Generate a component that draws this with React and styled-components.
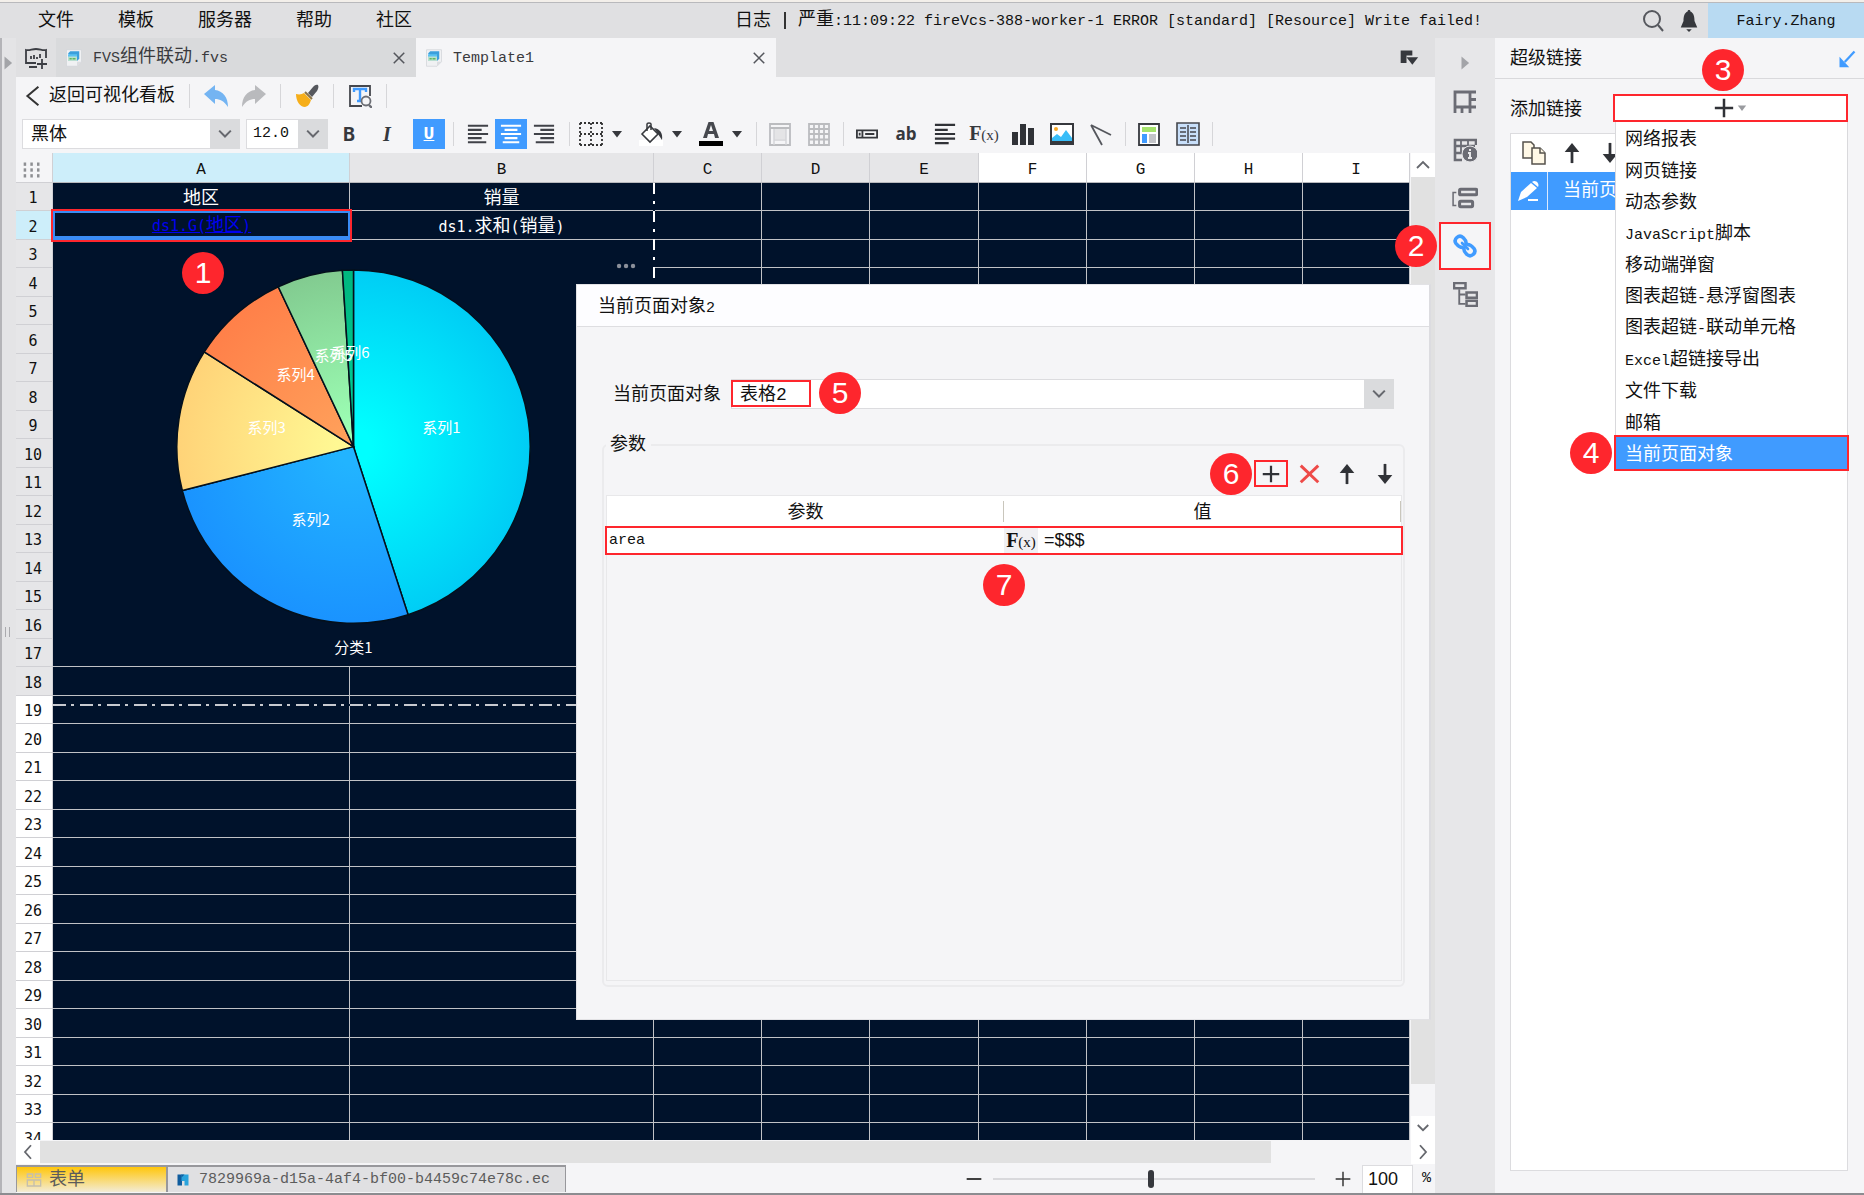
import React, { useState } from 'react'
import styled, { createGlobalStyle, css } from 'styled-components'

const RED = '#fe262d'
const BLUE = '#409bff'
const NAVY = '#00122b'

const columnas = [
  { name: 'A', width: 297, state: 'active' },
  { name: 'B', width: 304, state: 'used' },
  { name: 'C', width: 108, state: 'used' },
  { name: 'D', width: 108, state: 'used' },
  { name: 'E', width: 109, state: 'used' },
  { name: 'F', width: 108 },
  { name: 'G', width: 108 },
  { name: 'H', width: 108 },
  { name: 'I', width: 107 },
]
const rows = Array.from({ length: 34 }, (_, i) => i + 1)

const menus = ['文件', '模板', '服务器', '帮助', '社区']

const linkTypes = [
  '网络报表', '网页链接', '动态参数', 'JavaScript脚本', '移动端弹窗', '图表超链-悬浮窗图表',
  '图表超链-联动单元格', 'Excel超链接导出', '文件下载', '邮箱', '当前页面对象',
]

const series = [
  { name: '系列1', value: 45, inner: '#00ffff', outer: '#00cdf5', x: 389, y: 193 },
  { name: '系列2', value: 26, inner: '#22b4ff', outer: '#1a93ff', x: 258, y: 285 },
  { name: '系列3', value: 13, inner: '#fff893', outer: '#ffd378', x: 214, y: 193 },
  { name: '系列4', value: 9, inner: '#ff9f5a', outer: '#ff8049', x: 243, y: 140 },
  { name: '系列5', value: 6, inner: '#9cffb4', outer: '#82cb90', x: 281, y: 121 },
  { name: '系列6', value: 1, inner: '#00cf98', outer: '#00b67e', x: 298, y: 118 },
]

// half-width runs are set smaller so that two of them fill one full-width glyph
const Mixed = ({ children }) =>
  children.split(/([\x20-\x7e]+)/).filter(Boolean).map((part, i) =>
    /^[\x20-\x7e]/.test(part) ? <Latin key={i}>{part}</Latin> : <span key={i}>{part}</span>
  )

const PieChart = () => {
  const cx = 301
  const cy = 207
  const r = 177
  const point = (pct) => {
    const a = (pct / 100) * Math.PI * 2
    return `${(cx + r * Math.sin(a)).toFixed(2)} ${(cy - r * Math.cos(a)).toFixed(2)}`
  }
  let start = 0
  const slices = series.map((s) => {
    const from = start
    start += s.value
    return { ...s, d: `M${cx} ${cy}L${point(from)}A${r} ${r} 0 ${s.value > 50 ? 1 : 0} 1 ${point(start)}Z` }
  })
  return (
    <Chart viewBox="0 0 601 424" role="img" aria-label="分类1">
      <defs>
        {slices.map((s) => (
          <radialGradient key={s.name} id={`g-${s.value}`} gradientUnits="userSpaceOnUse" cx={cx} cy={cy} r={r}>
            <stop offset="0.1" stopColor={s.inner} />
            <stop offset="1" stopColor={s.outer} />
          </radialGradient>
        ))}
      </defs>
      {slices.map((s) => (
        <path key={s.name} d={s.d} fill={`url(#g-${s.value})`} stroke="#04101c" strokeWidth="1.5" />
      ))}
      {slices.map((s) => (
        <text key={s.name} x={s.x} y={s.y} textAnchor="middle">{s.name}</text>
      ))}
      <text x="301" y="414" textAnchor="middle">分类1</text>
      <g fill="#8b909a">
        <circle cx="567" cy="26" r="2.2" />
        <circle cx="574" cy="26" r="2.2" />
        <circle cx="581" cy="26" r="2.2" />
      </g>
    </Chart>
  )
}

const icons = {
  newTab: <g fill="none" stroke="#3c3e44" strokeWidth="1.8"><path d="M22 12V4c-3 1-6-1-10-1S5 5 2 4v13h10M5 21h8M18 13v10M13 18h10" /><path d="M7 13v-3M10 13V9M13 13v-2M16 12V8" /></g>,
  doc: <g><path d="M2 1h20v16l-6 6H2z" fill="#f0f1f3" stroke="#d2d4d8" /><path d="M4 6l3-3h12v10l-3 3z" fill="#3a9fdc" /><path d="M4 7h12v4H4z" fill="#59c2f2" /><path d="M4 10h12v6H4z" fill="#b9dfd0" /><path d="M6 12h3v2H6zM10 12h4v2h-4z" fill="#5db85f" /><path d="M16 23v-6h6z" fill="#dcdde1" /></g>,
  close: <path d="M5 5l14 14M19 5L5 19" stroke="#54565c" strokeWidth="2" fill="none" />,
  tabList: <g fill="#36383d"><path d="M2 3h14v6H9v9H2z" /><path d="M9 11h14l-7 9z" /></g>,
  back: <path d="M19 2L7 12l12 10" stroke="#333" strokeWidth="2.2" fill="none" />,
  undo: <path d="M0 10L11 1v5c8 1 13 7 13 17-4-6-8-8-13-8v5z" fill="#74b4f2" />,
  redo: <path d="M24 10L13 1v5C5 7 0 13 0 23c4-6 8-8 13-8v5z" fill="#b9babd" />,
  brush: <g><path d="M23 1c1 2 0 4-1 6l-5 6-4-4 5-6c1-1 3-3 5-2z" fill="#55575d" /><path d="M1 10c4 1 6 0 8-1l7 7c-1 3-2 6-6 7C5 23 1 17 1 10z" fill="#f6ae1a" /><path d="M10 8l7 7" stroke="#8a7346" strokeWidth="2" /></g>,
  find: <g fill="none"><path d="M22 12V2H2v20h12" stroke="#45474d" strokeWidth="1.8" /><path d="M6 8V5h12v3M12 5v12M9 17h5" stroke={BLUE} strokeWidth="2.4" /><circle cx="18" cy="17" r="4.5" fill="#f5f5f7" stroke="#6c6e75" strokeWidth="1.8" /><path d="M21 21l3 3" stroke="#6c6e75" strokeWidth="2.4" /></g>,
  left: <path d="M1 3h22M1 7.5h15M1 12h22M1 16.5h15M1 21h20" stroke="#404248" strokeWidth="2.4" />,
  center: <path d="M1 3h22M5 7.5h14M1 12h22M5 16.5h14M3 21h18" stroke="#fff" strokeWidth="2.2" />,
  right: <path d="M1 3h22M8 7.5h15M1 12h22M8 16.5h15M3 21h20" stroke="#404248" strokeWidth="2.4" />,
  border: <g fill="none" stroke="#333" strokeWidth="1.8" strokeDasharray="2 2"><path d="M1 1h22M1 23h22M1 1v22M23 1v22M12 1v22M1 12h22" /></g>,
  fill: <g><path d="M0 18h24v6H0z" fill="#fff" /><path d="M3 12l8-8 8 8-8 8z" fill="#fff" stroke="#36383d" strokeWidth="1.6" /><path d="M8 9V2c0-1.5 4-1.5 4 0v6" fill="none" stroke="#36383d" strokeWidth="1.5" /><path d="M15 6c6 1 9 5 8 12l-4-6z" fill="#36383d" /></g>,
  color: <g><path d="M0 19h24v5H0z" fill="#000" /><path d="M4 16L9.5 0h5L20 16h-4l-1-4H9l-1 4zM10 9h4l-2-6z" fill="#46484e" /></g>,
  frame: <g fill="none" stroke="#bbbcbf" strokeWidth="1.8"><path d="M6 7h12v10H6z" fill="#e4e4e6" stroke="none" /><path d="M2 2h20v21H2zM2 6h20" /><path d="M6 7v16M18 7v16M6 18h12" stroke="#d3d4d7" strokeWidth="1.4" /></g>,
  grid: <path d="M2 2h20v21H2zM2 7h20M2 12h20M2 17.5h20M7 2v21M12 2v21M17 2v21" fill="none" stroke="#bbbcbf" strokeWidth="1.8" />,
  widget: <g fill="none" stroke="#36383d" strokeWidth="2"><path d="M1 8h22v8H1zM7 8v8M10 12h10M4 10.5v3" /></g>,
  lines: <path d="M1 2h22M1 7.5h14M1 12h22M1 17h22M1 22h15" stroke="#303237" strokeWidth="2.4" />,
  bars: <path d="M1 10h6v13H1zM9 2h6v21H9zM17 6h6v17h-6z" fill="#303237" />,
  image: <g><path d="M1 2h22v20H1z" fill="#fff" stroke="#36383d" strokeWidth="2" /><path d="M2 20v-4l5-4 4 3 5-7 6 8v4z" fill="#38bdf8" /><path d="M0 19h24v4H0z" fill="#36383d" /><circle cx="6" cy="7" r="2" fill="#f9a825" /></g>,
  slash: <path d="M2 3l20 10M2 3l11 20" stroke="#55575d" strokeWidth="1.8" fill="none" />,
  layout: <g><path d="M2 2h20v21H2z" fill="#fff" stroke="#36383d" strokeWidth="1.8" /><path d="M5 5h14v5H5z" fill="#a5e36c" /><path d="M5 12h5v9H5z" fill={BLUE} /><path d="M12 12h7v9h-7z" fill="#c3c4c8" /></g>,
  report: <g><path d="M1 1h22v22H1z" fill="#c8dffa" stroke="#45474d" strokeWidth="1.6" /><path d="M12 3v18M4 6h6M14 6h6M4 10h6M14 10h6M4 14h6M14 14h6M4 18h6M14 18h6" stroke="#45474d" strokeWidth="1.5" /></g>,
  search: <g fill="none" stroke="#55575d" strokeWidth="2"><circle cx="11" cy="10" r="8" /><path d="M17 16l5 6" /></g>,
  bell: <g fill="#36383d"><path d="M12 0c1 0 1.5.6 1.5 1.6C17 3 18 7 18 12l3 7H3l3-7c0-5 1-9 4.500-10.400C10.500.6 11 0 12 0z" /><path d="M9 21h6l-3 3z" /></g>,
  jump: <g stroke={BLUE} fill="none"><path d="M22 2L9 16" strokeWidth="3" /><path d="M2 23V9l13 14z" fill={BLUE} stroke="none" /></g>,
  plus: <path d="M12 1v22M1 12h22" stroke="#303237" strokeWidth="3" />,
  remove: <path d="M2 3l20 19M22 3L2 22" stroke="#ee4a48" strokeWidth="3.4" />,
  up: <g><path d="M12 23V6" stroke="#303237" strokeWidth="3" /><path d="M12 1l8 10H4z" fill="#303237" /></g>,
  down: <g><path d="M12 1v17" stroke="#303237" strokeWidth="3" /><path d="M12 23L4 13h16z" fill="#303237" /></g>,
  copy: <g fill="#fff8e6" stroke="#55524c" strokeWidth="1.5"><path d="M1 1h8l3 3v13H1z" /><path d="M10 7h8l5 5v11H10z" /><path d="M18 7v5h5" /></g>,
  pencil: <g fill="#fff"><path d="M1 22l3-9L14 4l6 5-10 9z" /><path d="M15 3c3-3 8 1 6 5z" /><path d="M11 20h10v2H11z" /></g>,
  cellAttr: <g fill="none" stroke="#6b6c74" strokeWidth="2.8"><path d="M2 19V2h21M17 2v21M2 17h21M17 9.5h6M9 17v6M2 17v6" /></g>,
  cellInfo: <g fill="none" stroke="#6b6c74" strokeWidth="2.6"><path d="M9 22H2V2h21v5M2 8h20M2 15h7" /><path d="M8 2v14M15 2v6" strokeWidth="1.8" /><circle cx="17" cy="16" r="8" fill="#6b6c74" stroke="#e7e7e9" strokeWidth="1" /><path d="M17 11v2M15 15h2v5M15 20h4" stroke="#e7e7e9" strokeWidth="2" /></g>,
  widgets: <g fill="none" stroke="#6b6c74" strokeWidth="2.8"><rect x="7" y="4" width="16" height="5" rx="1" /><rect x="7" y="15" width="12" height="5" rx="1" /><path d="M4 7H1v12h3" strokeWidth="1.4" /></g>,
  link: <g fill="none" stroke={BLUE} strokeWidth="3.6" strokeLinecap="round"><path d="M13 9.500c.5-3-1.500-4.500-3-6-4-3.500-10 1.500-7 6 2 2.500 3.500 4 6.500 4" /><path d="M11 14.500c-.5 3 1.500 4.500 3 6 4 3.500 10-1.500 7-6-2-2.500-3.500-4-6.500-4" /><path d="M9 9l6 6" strokeWidth="2.6" /></g>,
  tree: <g fill="none" stroke="#6b6c74" strokeWidth="2.4"><path d="M1 1h11v5H1zM13 10h10v5H13zM13 18h10v5H13z" /><path d="M6 7v14h6M6 12h6" strokeWidth="1.8" /></g>,
  chevronDown: <path d="M5 8l7 7 7-7" stroke="#66686e" strokeWidth="2.4" fill="none" />,
  chevronUp: <path d="M4 16l8-8 8 8" stroke="#66686e" strokeWidth="2.4" fill="none" />,
  chevronRight: <path d="M8 3l8 9-8 9" stroke="#66686e" strokeWidth="2.4" fill="none" />,
  chevronLeft: <path d="M16 3l-8 9 8 9" stroke="#66686e" strokeWidth="2.4" fill="none" />,
  caret: <path d="M2 6h20L12 19z" fill="#36383d" />,
  softCaret: <path d="M2 6h20L12 19z" fill="#9a9b9f" />,
  play: <path d="M6 1l13 11L6 23z" fill="#a3a4a8" />,
  form: <g fill="none" stroke="#c4bfae" strokeWidth="2"><path d="M2 3h8v5H2zM14 3h8v5h-8zM2 12h20v9H2z" /><path d="M12 12v9" /></g>,
  block: <g><path d="M1 1h9v22H1z" fill="#0f5c9e" /><path d="M9 1h14v22h-8v-9H9z" fill="#2aa3dc" /><path d="M9 1h6l-6 6z" fill="#0f5c9e" /></g>,
  dots: <g fill="#8e8f93">{[2, 10, 18].map((x) => [3, 10, 17].map((y) => <rect key={`${x}${y}`} x={x} y={y} width="3" height="4" />))}</g>,
  minus: <path d="M1 12h22" stroke="#333" strokeWidth="2.8" />,
  thinPlus: <path d="M12 1v22M1 12h22" stroke="#333" strokeWidth="2.2" />,
}

const Icon = ({ name, size = 24 }) => (
  <svg width={size} height={size} viewBox="0 0 24 24" aria-hidden="true">{icons[name]}</svg>
)

const Tool = ({ icon, label, width = 24, size = 24, on, children }) => (
  <ToolButton type="button" aria-label={label} $width={width} $on={on}>
    {children || <Icon name={icon} size={size} />}
  </ToolButton>
)

const Dropdown = ({ id, label, value, small, marked, children }) => (
  <SelectBox>
    <Select id={id} aria-label={label} defaultValue={value} $small={small}>
      <option>{value}</option>
    </Select>
    <SelectArrow><Icon name="chevronDown" size={20} /></SelectArrow>
    {marked && <ValueMark />}
    {children}
  </SelectBox>
)

const Sheet = () => (
  <Grid>
    <colgroup>
      <col width="37" />
      {columnas.map((c) => <col key={c.name} width={c.width} />)}
    </colgroup>
    <thead>
      <tr>
        <Corner><Icon name="dots" size={20} /></Corner>
        {columnas.map((c) => <ColHead key={c.name} $state={c.state}>{c.name}</ColHead>)}
      </tr>
    </thead>
    <tbody>
      {rows.map((n) => (
        <Row key={n}>
          <RowHead $state={n === 2 ? 'active' : n < 19 ? 'used' : undefined}>{n}</RowHead>
          {n === 1 && <><Cell><Mixed>地区</Mixed></Cell><Cell><Mixed>销量</Mixed></Cell></>}
          {n === 2 && (
            <>
              <SelectedCell>
                <a href="#area"><Mixed>ds1.G(地区)</Mixed></a>
                <Badge $left={127} $top={39}>1</Badge>
              </SelectedCell>
              <Cell><Mixed>ds1.求和(销量)</Mixed></Cell>
            </>
          )}
          {n === 3 && <ChartCell colSpan={2} rowSpan={15}><PieChart /></ChartCell>}
          {n > 17 && <><Cell /><Cell /></>}
          {columnas.slice(2).map((c) => <Cell key={c.name} />)}
        </Row>
      ))}
    </tbody>
  </Grid>
)

const LinkDialog = () => {
  const [param, setParam] = useState('area')
  const [value, setValue] = useState('=$$$')
  return (
    <Dialog role="dialog" aria-label="当前页面对象2">
      <DialogTitle><Mixed>当前页面对象2</Mixed></DialogTitle>
      <DialogBody>
        <FieldLine>
          <label htmlFor="page-object">当前页面对象</label>
          <Dropdown id="page-object" value="表格2" marked>
            <Badge $left={88} $top={-7}>5</Badge>
          </Dropdown>
        </FieldLine>
        <Params>
          <legend>参数</legend>
          <ParamTools>
            <ParamTool type="button" aria-label="添加" $marked>
              <Icon name="plus" size={18} />
              <Badge $left={-46} $top={-9}>6</Badge>
            </ParamTool>
            <ParamTool type="button" aria-label="删除"><Icon name="remove" size={21} /></ParamTool>
            <ParamTool type="button" aria-label="上移"><Icon name="up" size={22} /></ParamTool>
            <ParamTool type="button" aria-label="下移"><Icon name="down" size={22} /></ParamTool>
          </ParamTools>
          <ParamList>
            <ParamTable>
              <thead>
                <tr><th>参数</th><th>值</th></tr>
              </thead>
              <tbody>
                <MarkedRow>
                  <td><CellInput aria-label="参数" value={param} onChange={(e) => setParam(e.target.value)} /></td>
                  <td>
                    <ValueEditor>
                      <FormulaButton type="button" aria-label="公式"><Fx /></FormulaButton>
                      <CellInput aria-label="值" $sans value={value} onChange={(e) => setValue(e.target.value)} />
                    </ValueEditor>
                  </td>
                </MarkedRow>
              </tbody>
            </ParamTable>
            <Badge $left={376} $top={68}>7</Badge>
          </ParamList>
        </Params>
      </DialogBody>
    </Dialog>
  )
}

const Fx = () => <FxText>F<small>(x)</small></FxText>

const App = () => {
  const [zoom, setZoom] = useState(100)

  return (
    <Shell>
      <GlobalStyle />
      <MenuBar>
        <Menus>
          {menus.map((m) => <MenuButton key={m} type="button">{m}</MenuButton>)}
        </Menus>
        <Log>
          <span>日志</span><i />
          <span><Mixed>严重:11:09:22 fireVcs-388-worker-1 ERROR [standard] [Resource] Write failed!</Mixed></span>
        </Log>
        <MenuIcons>
          <Tool icon="search" label="搜索" />
          <Tool icon="bell" label="通知" size={22} />
        </MenuIcons>
        <User type="button"><Latin>Fairy.Zhang</Latin></User>
      </MenuBar>

      <Body>
        <Gutter>
          <Icon name="play" size={14} />
          <span />
        </Gutter>

        <Main>
          <TabBar>
            <NewTab type="button" aria-label="新建"><Icon name="newTab" /></NewTab>
            <Tab><Icon name="doc" size={18} /><span><Mixed>FVS组件联动.fvs</Mixed></span><Tool icon="close" label="关闭" size={18} /></Tab>
            <Tab $active><Icon name="doc" size={18} /><span><Mixed>Template1</Mixed></span><Tool icon="close" label="关闭" size={18} /></Tab>
            <TabListButton type="button" aria-label="全部标签"><Icon name="tabList" size={20} /></TabListButton>
          </TabBar>

          <BackBar>
            <BackButton type="button"><Icon name="back" size={22} />返回可视化看板</BackButton>
            <Divider />
            <Tool icon="undo" label="撤销" />
            <Tool icon="redo" label="重做" />
            <Divider />
            <Tool icon="brush" label="格式刷" />
            <Divider />
            <Tool icon="find" label="查找" />
            <Divider />
          </BackBar>

          <FormatBar>
            <FontBox><Dropdown label="字体" value="黑体" /></FontBox>
            <SizeBox><Dropdown label="字号" value="12.0" small /></SizeBox>
            <Letters>
              <Tool label="加粗"><b>B</b></Tool>
              <Tool label="倾斜"><em>I</em></Tool>
              <Tool label="下划线" width={32} on><u>U</u></Tool>
            </Letters>
            <Divider />
            <Aligns>
              <Tool icon="left" label="左对齐" size={22} />
              <Tool icon="center" label="居中" width={32} size={22} on />
              <Tool icon="right" label="右对齐" size={22} />
            </Aligns>
            <Divider />
            <Pairs>
              <Pair type="button" aria-label="边框"><Icon name="border" /><Icon name="caret" size={12} /></Pair>
              <Pair type="button" aria-label="填充"><Icon name="fill" /><Icon name="caret" size={12} /></Pair>
              <Pair type="button" aria-label="字体颜色"><Icon name="color" /><Icon name="caret" size={12} /></Pair>
            </Pairs>
            <Divider />
            <Inserts>
              <Tool icon="frame" label="合并" />
              <Tool icon="grid" label="拆分" />
            </Inserts>
            <Divider />
            <Inserts>
              <Tool icon="widget" label="控件" size={22} />
              <Tool label="文本"><span>ab</span></Tool>
              <Tool icon="lines" label="富文本" size={22} />
              <Tool label="公式"><Fx /></Tool>
              <Tool icon="bars" label="图表" />
              <Tool icon="image" label="图片" />
              <Tool icon="slash" label="斜线" />
            </Inserts>
            <Divider />
            <Inserts>
              <Tool icon="layout" label="布局" />
              <Tool icon="report" label="子报表" />
            </Inserts>
            <Divider />
          </FormatBar>

          <SheetArea>
            <SheetView>
              <Sheet />
              <PageEdgeX />
              <PageEdgeY />
            </SheetView>
            <VScroll>
              <ScrollButton type="button" aria-label="向上"><Icon name="chevronUp" size={18} /></ScrollButton>
              <VThumb />
              <ScrollButton type="button" aria-label="向下"><Icon name="chevronDown" size={18} /></ScrollButton>
            </VScroll>
            <LinkDialog />
          </SheetArea>

          <HScroll>
            <ScrollButton type="button" aria-label="向左"><Icon name="chevronLeft" size={18} /></ScrollButton>
            <HThumb />
            <ScrollButton type="button" aria-label="向右"><Icon name="chevronRight" size={18} /></ScrollButton>
          </HScroll>

          <StatusBar>
            <SheetTab type="button" $form><Icon name="form" size={16} />表单</SheetTab>
            <SheetTab type="button"><Icon name="block" size={12} /><Latin>7829969a-d15a-4af4-bf00-b4459c74e78c.ec</Latin></SheetTab>
            <Zoom>
              <Tool icon="minus" label="缩小" size={16} />
              <ZoomRange type="range" aria-label="缩放" min="0" max="204" value={zoom} onChange={(e) => setZoom(Number(e.target.value))} />
              <Tool icon="thinPlus" label="放大" size={16} />
              <ZoomInput aria-label="缩放比例" value={zoom} onChange={(e) => setZoom(Number(e.target.value) || 0)} />
              <Latin>%</Latin>
            </Zoom>
          </StatusBar>
        </Main>

        <Rail>
          <Collapse type="button" aria-label="收起"><Icon name="play" size={14} /></Collapse>
          <RailButton type="button" aria-label="单元格属性"><Icon name="cellAttr" /></RailButton>
          <RailButton type="button" aria-label="单元格信息"><Icon name="cellInfo" /></RailButton>
          <RailButton type="button" aria-label="控件设置"><Icon name="widgets" size={26} /></RailButton>
          <RailButton type="button" aria-label="超级链接" $marked>
            <Icon name="link" />
            <Badge $left={-46} $top={1}>2</Badge>
          </RailButton>
          <RailButton type="button" aria-label="组件树"><Icon name="tree" size={25} /></RailButton>
        </Rail>

        <Panel>
          <PanelHead>超级链接<Icon name="jump" size={18} /></PanelHead>
          <PanelBody>
            <AddLine>
              <label htmlFor="add-link">添加链接</label>
              <AddBox>
                <AddButton type="button" id="add-link"><Icon name="plus" size={20} /><Icon name="softCaret" size={10} /></AddButton>
                <Badge $left={89} $top={-45}>3</Badge>
                <LinkMenu>
                  {linkTypes.map((t, i) => (
                    <li key={t}>
                      <LinkItem type="button" $active={i === 10}><Mixed>{t}</Mixed></LinkItem>
                      {i === 10 && <Badge $left={-46} $top={-5}>4</Badge>}
                    </li>
                  ))}
                </LinkMenu>
              </AddBox>
            </AddLine>
            <LinkList>
              <ListTools>
                <Tool icon="copy" label="复制" />
                <Tool icon="up" label="上移" size={22} />
                <Tool icon="down" label="下移" size={22} />
              </ListTools>
              <LinkRow>
                <LinkEdit type="button" aria-label="编辑"><Icon name="pencil" /></LinkEdit>
                <span><Mixed>当前页面对象2</Mixed></span>
              </LinkRow>
            </LinkList>
          </PanelBody>
        </Panel>
      </Body>
    </Shell>
  )
}

const GlobalStyle = createGlobalStyle`
  * { box-sizing: border-box; }
  body {
    margin: 0;
    background: #f5f5f7;
    color: #111;
    font: 18px/24px "Liberation Mono", "Noto Sans CJK SC", monospace;
  }
  button, input, select { font: inherit; color: inherit; }
  button { border: 0; padding: 0; margin: 0; background: none; }
  svg { display: block; flex: none; }
`
const Latin = styled.span`
  font-family: "Liberation Mono", monospace;
  font-size: 15px;
`
const Badge = styled.b`
  position: absolute;
  left: ${(p) => p.$left}px;
  top: ${(p) => p.$top}px;
  z-index: 5;
  width: 42px;
  height: 42px;
  border-radius: 50%;
  background: ${RED};
  color: #fff;
  font: 30px/42px "Liberation Sans", sans-serif;
  text-align: center;
`
const Shell = styled.div`
  display: flex;
  flex-direction: column;
  height: 100vh;
  overflow: hidden;
  border-top: 2px solid #f3efea;
  border-bottom: 2px solid #8c8c90;
`
const MenuBar = styled.header`
  display: flex;
  flex: none;
  height: 36px;
  align-items: stretch;
  background: #e0e0e2;
  border-top: 1px solid #b9b9bc;
`
const Menus = styled.nav`
  display: flex;
  gap: 44px;
  padding-left: 38px;
  flex: 1;
`
const MenuButton = styled.button`
  white-space: nowrap;
`
const Log = styled.div`
  display: flex;
  align-items: center;
  white-space: pre;
  i {
    width: 2px;
    height: 17px;
    margin: 0 12px 0 13px;
    background: #333;
  }
`
const MenuIcons = styled.div`
  display: flex;
  align-items: center;
  gap: 12px;
  padding: 0 7px 0 159px;
`
const User = styled.button`
  width: 156px;
  background: #b8daf2;
`
const Body = styled.div`
  display: flex;
  flex: 1;
  min-height: 0;
`
const Gutter = styled.div`
  display: flex;
  flex-direction: column;
  align-items: center;
  width: 16px;
  padding: 18px 3px 0 0;
  background: #e4e4e6;
  border-left: 2px solid #b4b4b8;
  span {
    width: 5px;
    height: 10px;
    margin: auto;
    border: solid #aaaaae;
    border-width: 0 1px;
  }
`
const Main = styled.main`
  display: flex;
  flex-direction: column;
  flex: 1;
  min-width: 0;
`
const TabBar = styled.div`
  display: flex;
  flex: none;
  height: 39px;
  background: #e0e0e2;
`
const NewTab = styled.button`
  display: flex;
  align-items: center;
  width: 40px;
  padding-left: 8px;
`
const Tab = styled.div`
  display: flex;
  align-items: center;
  gap: 10px;
  width: 360px;
  padding: 0 5px 0 9px;
  background: ${(p) => (p.$active ? '#f5f5f7' : '#d9dadc')};
  color: #3a3a3e;
  span { flex: 1; }
`
const TabListButton = styled.button`
  display: flex;
  align-items: center;
  margin-left: auto;
  padding-right: 16px;
`
const ToolButton = styled.button`
  display: flex;
  align-items: center;
  justify-content: center;
  flex: none;
  width: ${(p) => p.$width}px;
  height: 30px;
  color: #36383d;
  ${(p) => p.$on && css`
    background: ${BLUE};
    color: #fff;
  `}
  b { font: bold 20px/24px "DejaVu Sans Mono", monospace; }
  em { font: italic bold 20px/24px "Liberation Serif", serif; }
  u { font: bold 18px/24px "Liberation Mono", monospace; }
  span { font: bold 17px/24px "Open Sans", sans-serif; }
`
const bar = css`
  display: flex;
  flex: none;
  align-items: center;
  height: 38px;
`
const BackBar = styled.div`
  ${bar}
  gap: 14px;
  padding-left: 5px;
`
const BackButton = styled.button`
  display: flex;
  align-items: center;
  gap: 6px;
`
const Divider = styled.i`
  flex: none;
  width: 1px;
  height: 24px;
  background: #d6d6d9;
`
const FormatBar = styled.div`
  ${bar}
  padding-left: 6px;
`
const FontBox = styled.div`
  display: flex;
  width: 218px;
`
const SizeBox = styled.div`
  display: flex;
  width: 82px;
  margin-left: 6px;
`
const Letters = styled.div`
  display: flex;
  gap: 14px;
  padding: 0 8px 0 9px;
`
const Aligns = styled.div`
  display: flex;
  gap: 5px;
  padding: 0 13px 0 12px;
`
const Pairs = styled.div`
  display: flex;
  gap: 16px;
  padding: 0 13px 0 9px;
`
const Pair = styled.button`
  display: flex;
  align-items: center;
  gap: 8px;
`
const Inserts = styled.div`
  display: flex;
  gap: 15px;
  padding: 0 12px 0 11px;
`
const SelectBox = styled.div`
  position: relative;
  display: grid;
  grid-template-columns: 1fr 30px;
  flex: 1;
  height: 30px;
  min-width: 0;
`
const Select = styled.select`
  grid-area: 1 / 1 / 2 / 3;
  appearance: none;
  min-width: 0;
  padding: ${(p) => (p.$small ? 0 : 2)}px 32px 0 ${(p) => (p.$small ? 6 : 8)}px;
  border: 1px solid #dcdcdf;
  border-radius: 0;
  background: #fff;
  font-size: ${(p) => (p.$small ? 15 : 18)}px;
  line-height: 26px;
`
const SelectArrow = styled.span`
  grid-area: 1 / 2;
  display: flex;
  align-items: center;
  justify-content: center;
  background: #dadbdd;
  pointer-events: none;
`
const ValueMark = styled.i`
  position: absolute;
  left: 0;
  top: 1px;
  width: 80px;
  height: 27px;
  border: 2px solid ${RED};
  pointer-events: none;
`
const FxText = styled.span`
  && { font: bold 20px/24px "Liberation Serif", serif; }
  white-space: nowrap;
  small { font: 15px/24px "Liberation Serif", serif; }
`
const SheetArea = styled.div`
  position: relative;
  display: flex;
  flex: 1;
  min-height: 0;
`
const SheetView = styled.div`
  position: relative;
  flex: 1;
  min-width: 0;
  overflow: hidden;
`
const Grid = styled.table`
  width: 1394px;
  table-layout: fixed;
  border-collapse: separate;
  border-spacing: 0;
  th, td { padding: 0; }
`
const headBack = { active: '#cdeefa', used: '#e6e6e8' }
const ColHead = styled.th`
  height: 30px;
  background: ${(p) => headBack[p.$state] || '#fff'};
  border-right: 1px solid #d0d0d4;
  border-bottom: 1px solid #b8b9bd;
  && { padding-top: 5px; }
  font: 16px/20px "Liberation Mono", monospace;
`
const Corner = styled.th`
  background: #f5f5f7;
  border-right: 1px solid #d0d0d4;
  border-bottom: 1px solid #d0d0d4;
  && { padding: 4px 0 0 6px; }
`
const Row = styled.tr`
  height: 28px;
  &:nth-child(even) { height: 29px; }
`
const RowHead = styled.th`
  background: ${(p) => headBack[p.$state] || '#fff'};
  border-right: 1px solid #d0d0d4;
  border-bottom: 1px solid #d0d0d4;
  && { padding: 3px 2px 0 0; }
  font: 15px/20px "DejaVu Sans Mono", monospace;
`
const Cell = styled.td`
  background: ${NAVY};
  border-right: 1px solid #c0c2c6;
  border-bottom: 1px solid #c0c2c6;
  && { padding-top: 4px; }
  color: #fff;
  text-align: center;
  line-height: 22px;
  ${Latin} { font-family: "DejaVu Sans Mono", monospace; }
`
const SelectedCell = styled(Cell)`
  position: relative;
  border: 2px solid #3a8cf5;
  border-bottom-width: 4px;
  outline: 2px solid ${RED};
  line-height: 20px;
  && { padding-top: 2px; }
  a { color: #0000f0; }
`
const ChartCell = styled(Cell)`
  vertical-align: top;
  && { padding-top: 0; }
`
const Chart = styled.svg`
  width: 100%;
  text {
    fill: #fff;
    font: 15px "Noto Sans CJK SC", sans-serif;
  }
`
const PageEdgeX = styled.i`
  position: absolute;
  left: 637px;
  top: 30px;
  width: 2px;
  height: 500px;
  background: repeating-linear-gradient(#fff 0 11px, ${NAVY} 11px 18px, #fff 18px 21px, ${NAVY} 21px 28px);
`
const PageEdgeY = styled.i`
  position: absolute;
  left: 37px;
  top: 551px;
  width: 600px;
  height: 2px;
  background: repeating-linear-gradient(90deg, #c8cad0 0 13px, ${NAVY} 13px 18px, #c8cad0 18px 21px, ${NAVY} 21px 27px);
`
const VScroll = styled.div`
  display: flex;
  flex-direction: column;
  width: 24px;
  background: #f5f5f7;
`
const VThumb = styled.div`
  flex: 1;
  margin-bottom: 32px;
  background: #e1e1e1;
`
const HScroll = styled.div`
  display: flex;
  flex: none;
  height: 24px;
`
const HThumb = styled.div`
  flex: 1;
  margin: 1px 140px 1px 0;
  background: #e1e1e1;
`
const ScrollButton = styled.button`
  display: flex;
  align-items: center;
  justify-content: center;
  width: 24px;
  height: 24px;
  background: #fff;
`
const StatusBar = styled.footer`
  display: flex;
  flex: none;
  height: 29px;
  padding-top: 1px;
`
const SheetTab = styled.button`
  display: flex;
  align-items: center;
  gap: ${(p) => (p.$form ? 7 : 10)}px;
  width: ${(p) => (p.$form ? 151 : 399)}px;
  height: 27px;
  padding-left: 9px;
  border: solid #98989c;
  border-width: 2px 1px 0;
  background: ${(p) => (p.$form ? 'linear-gradient(#ffc60b, #f3ecd6)' : '#e0e0e2')};
  color: #5c5c5c;
`
const Zoom = styled.div`
  display: flex;
  align-items: center;
  margin-left: auto;
  padding-right: 4px;
`
const ZoomRange = styled.input`
  appearance: none;
  width: 322px;
  height: 20px;
  margin: 0 16px 0 7px;
  background: linear-gradient(#d9d9dc, #d9d9dc) center / 100% 2px no-repeat;
  &::-webkit-slider-thumb {
    appearance: none;
    width: 6px;
    height: 18px;
    border-radius: 3px;
    background: #36383d;
  }
`
const ZoomInput = styled.input`
  width: 51px;
  height: 29px;
  margin: 0 9px 0 7px;
  padding: 0 5px;
  border: 1px solid #dcdcdf;
  background: #fff;
  font: 18px/24px "Liberation Sans", sans-serif;
`
const Rail = styled.aside`
  display: flex;
  flex: none;
  flex-direction: column;
  align-items: center;
  width: 60px;
  background: #e7e7e9;
`
const Collapse = styled.button`
  height: 40px;
  padding-top: 10px;
`
const RailButton = styled.button`
  position: relative;
  display: flex;
  align-items: center;
  justify-content: center;
  width: 52px;
  height: 48px;
  ${(p) => p.$marked && css`
    background: #f5f5f7;
    border: 2px solid ${RED};
  `}
`
const Panel = styled.section`
  display: flex;
  flex: none;
  flex-direction: column;
  width: 369px;
`
const PanelHead = styled.h2`
  display: flex;
  align-items: center;
  justify-content: space-between;
  height: 41px;
  margin: 0;
  padding: 2px 8px 0 15px;
  border-bottom: 1px solid #d9d9dc;
  font-size: 18px;
  font-weight: normal;
`
const PanelBody = styled.div`
  display: flex;
  flex: 1;
  flex-direction: column;
  padding: 15px 16px 22px 15px;
`
const AddLine = styled.div`
  display: flex;
  align-items: center;
  gap: 31px;
  label { padding-top: 3px; }
`
const AddBox = styled.div`
  position: relative;
  flex: 1;
`
const AddButton = styled.button`
  display: flex;
  align-items: center;
  justify-content: center;
  gap: 3px;
  width: 100%;
  height: 28px;
  border: 2px solid ${RED};
  background: #fff;
`
const LinkMenu = styled.ul`
  position: absolute;
  top: 28px;
  left: 2px;
  right: 0;
  z-index: 3;
  margin: 0;
  padding: 0;
  list-style: none;
  background: #fff;
  border: 1px solid #d9d9dc;
  border-top: 0;
  li {
    position: relative;
    height: 31px;
  }
  li:nth-child(odd) { height: 32px; }
`
const LinkItem = styled.button`
  width: 100%;
  height: 100%;
  padding: 4px 0 0 9px;
  text-align: left;
  ${(p) => p.$active && css`
    background: ${BLUE};
    color: #fff;
    outline: 2px solid ${RED};
  `}
`
const LinkList = styled.div`
  flex: 1;
  margin-top: 11px;
  border: 1px solid #dcdcdf;
  background: #fff;
`
const ListTools = styled.div`
  display: flex;
  align-items: center;
  gap: 14px;
  height: 38px;
  padding-left: 11px;
`
const LinkRow = styled.div`
  display: flex;
  align-items: center;
  gap: 15px;
  height: 38px;
  background: ${BLUE};
  color: #fff;
  > span { padding-top: 2px; }
`
const LinkEdit = styled.button`
  display: flex;
  align-items: center;
  justify-content: center;
  width: 37px;
  height: 38px;
  border-right: 1px solid #dbeaff;
`
const Dialog = styled.section`
  position: absolute;
  left: 560px;
  right: 4px;
  top: 131px;
  z-index: 2;
  background: #f5f5f7;
  border: 1px solid #e2e2e5;
  border-right: 2px solid #dcdce0;
`
const DialogTitle = styled.h3`
  height: 42px;
  margin: 0;
  padding: 10px 21px 0;
  background: #fdfdff;
  border-bottom: 1px solid #dedee1;
  font-size: 18px;
  font-weight: normal;
`
const DialogBody = styled.div`
  padding: 52px 24px 32px 25px;
`
const FieldLine = styled.div`
  display: flex;
  align-items: center;
  gap: 10px;
  padding: 0 11px;
  label { padding-top: 2px; }
`
const Params = styled.fieldset`
  min-width: 0;
  margin: 24px 0 0;
  padding: 3px 1px 4px 2px;
  border: 2px solid #ebebed;
  border-radius: 6px;
  legend { padding: 0 5px 0 4px; }
`
const ParamTools = styled.div`
  display: flex;
  justify-content: flex-end;
  gap: 4px;
`
const ParamTool = styled.button`
  position: relative;
  display: flex;
  align-items: center;
  justify-content: center;
  width: 34px;
  height: 27px;
  ${(p) => p.$marked && css`border: 2px solid ${RED};`}
`
const ParamList = styled.div`
  position: relative;
  min-height: 486px;
  margin-top: 8px;
  border: 1px solid #e8e8ea;
`
const ParamTable = styled.table`
  width: 100%;
  table-layout: fixed;
  border-collapse: separate;
  border-spacing: 0;
  th, td { padding: 0; }
  th {
    height: 32px;
    padding-top: 3px;
    background: linear-gradient(#c9c6bc, #c9c6bc) right center / 1px 21px no-repeat #fff;
    border-bottom: 2px solid #dadadd;
    font-weight: normal;
  }
`
const MarkedRow = styled.tr`
  background: #fff;
  outline: 2px solid ${RED};
`
const ValueEditor = styled.div`
  display: flex;
`
const FormulaButton = styled.button`
  flex: none;
  width: 34px;
  height: 25px;
  background: #f0f0f3;
`
const CellInput = styled.input`
  display: block;
  width: 100%;
  height: 25px;
  padding: 0 ${(p) => (p.$sans ? 6 : 2)}px;
  border: 0;
  background: transparent;
  font: ${(p) => (p.$sans ? '18px "Liberation Sans", sans-serif' : '15px "Liberation Mono", monospace')};
`

export default App
